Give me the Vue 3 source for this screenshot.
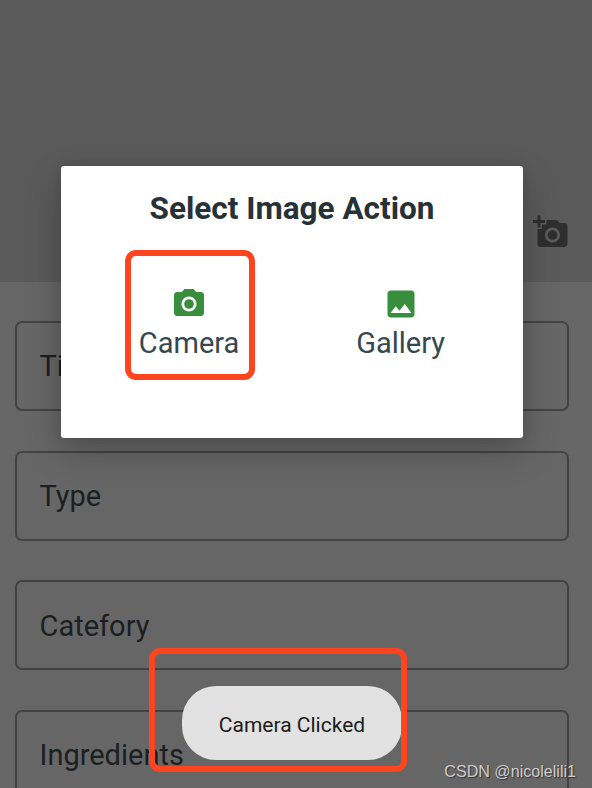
<script setup>
const fields = ['Title', 'Type', 'Catefory', 'Ingredients']
</script>

<template>
  <div class="screen">
    <header class="photo">
      <svg class="icon" viewBox="0 0 24 24"><path d="M3 4V1h2v3h3v2H5v3H3V6H0V4h3zm3 6V7h3V4h7l1.83 2H21c1.1 0 2 .9 2 2v12c0 1.1-.9 2-2 2H5c-1.1 0-2-.9-2-2V10h3zm7 9c2.76 0 5-2.24 5-5s-2.24-5-5-5-5 2.24-5 5 2.24 5 5 5zm-3.2-5c0 1.77 1.43 3.2 3.2 3.2s3.2-1.43 3.2-3.2-1.43-3.2-3.2-3.2-3.2 1.43-3.2 3.2z" /></svg>
    </header>
    <main class="form">
      <div v-for="f in fields" :key="f" class="field"><span>{{ f }}</span></div>
    </main>

    <section class="dialog">
      <h1><span>Select Image Action</span></h1>
      <div class="actions">
        <div class="action">
          <svg class="icon" viewBox="0 0 24 24"><circle cx="12" cy="12" r="3.2" /><path d="M9 2L7.17 4H4c-1.1 0-2 .9-2 2v12c0 1.1.9 2 2 2h16c1.1 0 2-.9 2-2V6c0-1.1-.9-2-2-2h-3.17L15 2H9zm3 15c-2.76 0-5-2.24-5-5s2.24-5 5-5 5 2.24 5 5-2.24 5-5 5z" /></svg>
          <span>Camera</span>
        </div>
        <div class="action">
          <svg class="icon" viewBox="0 0 24 24"><path d="M21 19V5c0-1.1-.9-2-2-2H5c-1.1 0-2 .9-2 2v14c0 1.1.9 2 2 2h14c1.1 0 2-.9 2-2zM8.5 13.5l2.5 3.01L14.5 12l4.5 6H5l3.5-4.5z" /></svg>
          <span>Gallery</span>
        </div>
      </div>
    </section>

    <div class="toast"><span>Camera Clicked</span></div>
    <div class="mark mark-action"></div>
    <div class="mark mark-toast"></div>
    <div class="watermark">CSDN @nicolelili1</div>
  </div>
</template>

<style>
body { margin: 0; }
</style>

<style scoped>
.screen {
  position: relative;
  box-sizing: border-box;
  width: 592px;
  height: 788px;
  overflow: hidden;
  background: #666;
  font-family: Roboto, "Liberation Sans", sans-serif;
}
.icon { display: block; width: 36px; height: 36px; flex: none; }
.photo {
  box-sizing: border-box;
  height: 282px;
  padding: 0 23.5px 32.5px 0;
  display: flex;
  justify-content: flex-end;
  align-items: flex-end;
  background: #5a5a5a;
  fill: #2e2e2e;
}
.form {
  display: flex;
  flex-direction: column;
  gap: 39.7px;
  padding: 39px 23px 0 15px;
}
.field {
  box-sizing: border-box;
  height: 90px;
  flex: none;
  display: flex;
  align-items: center;
  padding: .5px 0 0 22.5px;
  border: 2px solid #434343;
  border-radius: 7px;
  color: #1b1f21;
  font-size: 29px;
}
.dialog {
  position: absolute;
  left: 61px;
  top: 166px;
  width: 462px;
  height: 272px;
  box-sizing: border-box;
  border-radius: 3px;
  background: #fff;
  box-shadow: 0 14px 36px rgba(0, 0, 0, .24), 0 0 12px rgba(0, 0, 0, .08);
}
h1 {
  margin: 0;
  padding-top: 24px;
  text-align: center;
  font-size: 31.5px;
  line-height: 37px;
  font-weight: 700;
  color: #263238;
}
.actions {
  display: grid;
  grid-template-columns: 1fr 1fr;
  padding: 59px 16.7px 0 22.3px;
}
.action {
  display: flex;
  flex-direction: column;
  align-items: center;
  gap: 4px;
  fill: #388e3c;
  color: #37474f;
  font-size: 29px;
  line-height: 35px;
}
.toast {
  position: absolute;
  left: 182px;
  top: 686px;
  width: 220px;
  height: 74px;
  box-sizing: border-box;
  padding-top: 3px;
  display: flex;
  align-items: center;
  justify-content: center;
  border-radius: 34px;
  background: rgba(228, 228, 228, .98);
  color: #1c1c1c;
  font-size: 21px;
}
.mark {
  position: absolute;
  box-sizing: border-box;
  border: 6px solid #ff4420;
  border-radius: 11px;
}
.mark-action { left: 125px; top: 250px; width: 130px; height: 130px; }
.mark-toast { left: 149px; top: 648px; width: 258px; height: 124px; }
.watermark {
  position: absolute;
  right: 16px;
  top: 762px;
  font-family: "Liberation Sans", "Noto Sans CJK SC", sans-serif;
  font-size: 16.1px;
  line-height: 19px;
  color: #ccc;
  text-shadow: 1px 1px 1px #333;
  white-space: nowrap;
}
</style>
